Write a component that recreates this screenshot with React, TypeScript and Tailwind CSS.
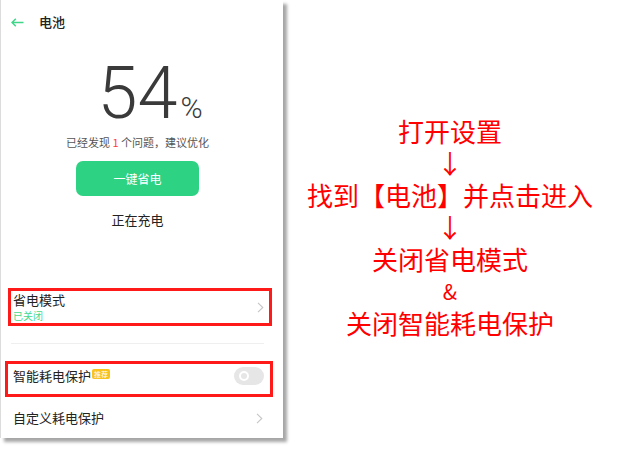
const cjk = { fontFamily: '"Noto Sans CJK SC", "Noto Sans", sans-serif' };

function Chevron() {
  return (
    <svg width="7" height="11" viewBox="0 0 7 11" fill="none">
      <path d="M1 0.8 L5.8 5.5 L1 10.2" stroke="#c6c6c6" strokeWidth="1.1" />
    </svg>
  );
}

function Phone() {
  return (
    <div className="w-[283px] h-[438px] bg-white border-l border-[#dcdcdc] shadow-[4px_4px_3px_rgba(0,0,0,0.35)] flex flex-col shrink-0" style={cjk}>
      <header className="h-[44px] flex items-center pl-[10px] shrink-0">
        <svg width="13" height="9" viewBox="0 0 13 9" fill="none">
          <path d="M12.5 4.5 H1.2 M4.8 0.8 L1 4.5 L4.8 8.2" stroke="#3fd68a" strokeWidth="1.5" />
        </svg>
        <span className="ml-[15px] text-[13px] font-medium text-[#222]">电池</span>
      </header>

      <div className="flex flex-col items-center pr-[9px]">
        <div className="relative mt-[14px] text-[72px] leading-[72px] font-light text-[#3a3a3a]" style={{ fontFamily: "Roboto, sans-serif" }}>
          54
          <span className="absolute left-full bottom-[7px] ml-[3px] text-[30px] leading-none font-light">%</span>
        </div>
        <p className="mt-[5px] text-[11px] leading-[14px] text-[#555]">
          已经发现 <span className="text-[#ff3b3b]">1</span> 个问题，建议优化
        </p>
        <button className="mt-[12px] w-[123px] h-[35px] rounded-[7px] bg-[#2dd283] text-white text-[12px]">一键省电</button>
        <p className="mt-[16px] text-[13px] leading-[16px] text-[#222]">正在充电</p>
      </div>

      <div className="mt-[60px] ml-[7px] w-[264px] h-[38px] border-[3px] border-[#ff1a1a] flex items-center pl-[2px] pr-[5px]">
        <div className="flex-1 flex flex-col">
          <span className="text-[13px] leading-[16px] text-[#222]">省电模式</span>
          <span className="mt-[2px] text-[10px] leading-[12px] text-[#45d98c]">已关闭</span>
        </div>
        <Chevron />
      </div>

      <div className="mt-[17px] ml-[10px] w-[253px] h-px bg-[#efefef]" />

      <div className="mt-[17px] ml-[4px] w-[268px] h-[36px] border-[3px] border-[#ff1a1a] flex items-center pl-[5px] pr-[6px] pb-[6px]">
        <span className="text-[13px] leading-[16px] text-[#222]">智能耗电保护</span>
        <span className="ml-[1px] mt-[-4px] h-[10px] px-[2px] rounded-[2px] bg-[#f8c31a] text-white text-[7px] leading-[10px]">推荐</span>
        <div className="ml-auto w-[30px] h-[18px] rounded-full bg-[#e6e6e6] flex items-center pl-[5px]">
          <div className="w-[10px] h-[10px] rounded-full border-2 border-white" />
        </div>
      </div>

      <div className="mt-[9px] h-[24px] flex items-center pl-[12px] pr-[20px]">
        <span className="flex-1 text-[13px] leading-[16px] text-[#222]">自定义耗电保护</span>
        <Chevron />
      </div>
    </div>
  );
}

export default function App() {
  return (
    <div className="w-[620px] h-[451px] bg-white flex overflow-hidden">
      <Phone />
      <div className="flex-1 flex flex-col items-center pt-[115px] pl-[7px] pr-[10px] text-[#ff0000] text-[26px] leading-[32px]" style={cjk}>
        <p>打开设置</p>
        <p>↓</p>
        <p>找到【电池】并点击进入</p>
        <p>↓</p>
        <p>关闭省电模式</p>
        <p className="text-[21px]">&amp;</p>
        <p>关闭智能耗电保护</p>
      </div>
    </div>
  );
}
